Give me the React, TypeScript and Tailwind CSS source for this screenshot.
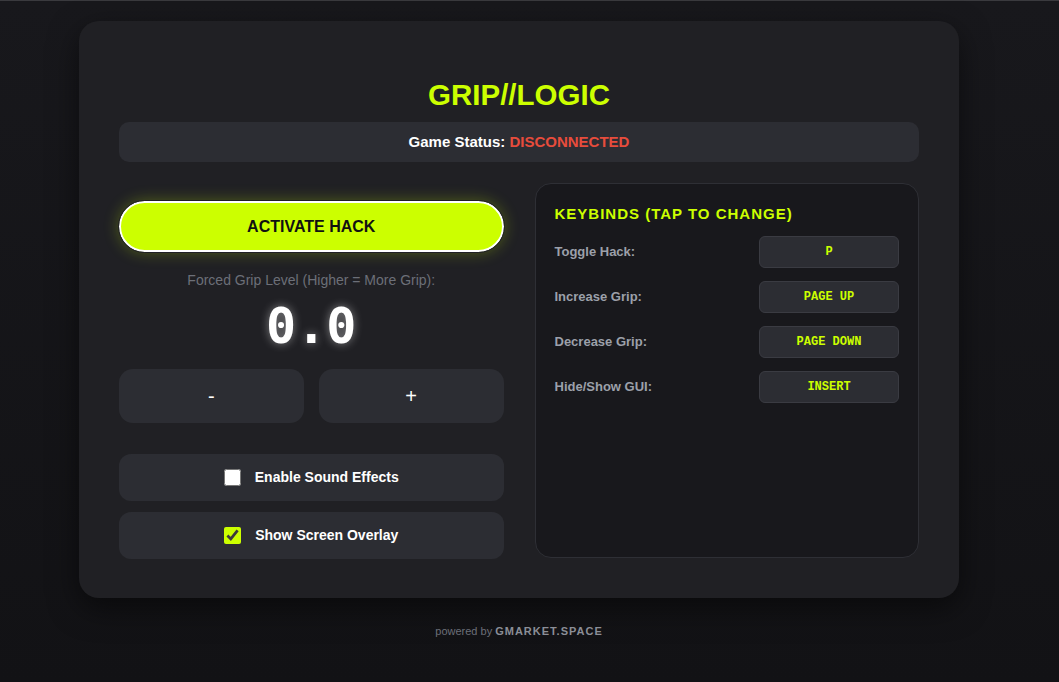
import { useState } from 'react';

const keybinds = [
    { label: 'Toggle Hack:', key: 'P' },
    { label: 'Increase Grip:', key: 'PAGE UP' },
    { label: 'Decrease Grip:', key: 'PAGE DOWN' },
    { label: 'Hide/Show GUI:', key: 'INSERT' },
];

export default function App() {
    const [grip, setGrip] = useState(0);
    const [sound, setSound] = useState(false);
    const [overlay, setOverlay] = useState(true);

    return (
        <div className="min-h-[682px] border-t border-[#3a3a3e] bg-gradient-to-b from-[#18181c] to-[#121215] font-['Liberation_Sans',Arial,sans-serif] flex flex-col items-center pt-[20px] pr-[21px]">
            {/* Main card */}
            <div className="w-[880px] h-[577px] bg-[#202024] rounded-[20px] shadow-[0_10px_30px_rgba(0,0,0,0.5)] px-[40px] pt-[58px]">
                <h1 className="text-center text-[29.5px] leading-[32px] font-bold text-[#ccff00]">GRIP//LOGIC</h1>

                <div className="mt-[11px] h-[40px] rounded-[10px] bg-[#2c2d33] flex items-center justify-center text-[15px] font-bold text-white">
                    Game Status:&nbsp;<span className="text-[#e74c3c]">DISCONNECTED</span>
                </div>

                <div className="mt-[21px] grid grid-cols-2 gap-[31px]">
                    {/* Left column */}
                    <div className="flex flex-col pt-[18px]">
                        <button className="h-[51px] rounded-full bg-[#ccff00] border-2 border-white outline outline-1 outline-[#202024] shadow-[0_0_16px_rgba(204,255,0,0.3)] text-[#111] text-[16px] font-bold">
                            ACTIVATE HACK
                        </button>
                        <div className="mt-[18px] text-center text-[14px] text-[#6c6f78]">Forced Grip Level (Higher = More Grip):</div>
                        <div className="mt-[6px] text-center font-['DejaVu_Sans_Mono',monospace] font-bold text-[50px] leading-[58px] text-white [text-shadow:0_0_10px_rgba(255,255,255,0.45)]">
                            {grip.toFixed(1)}
                        </div>
                        <div className="mt-[14px] grid grid-cols-2 gap-[15px]">
                            <button onClick={() => setGrip(grip - 0.1)} className="h-[54px] rounded-[14px] bg-[#2c2d33] text-white text-[20px]">-</button>
                            <button onClick={() => setGrip(grip + 0.1)} className="h-[54px] rounded-[14px] bg-[#2c2d33] text-white text-[20px]">+</button>
                        </div>
                        <label className="mt-[31px] h-[47px] rounded-[12px] bg-[#2c2d33] flex items-center justify-center gap-[14px] text-white text-[14px] font-bold cursor-pointer">
                            <input type="checkbox" checked={sound} onChange={() => setSound(!sound)} className="w-[17px] h-[17px] accent-[#ccff00]" />
                            Enable Sound Effects
                        </label>
                        <label className="mt-[11px] h-[47px] rounded-[12px] bg-[#2c2d33] flex items-center justify-center gap-[14px] text-white text-[14px] font-bold cursor-pointer">
                            <input type="checkbox" checked={overlay} onChange={() => setOverlay(!overlay)} className="w-[17px] h-[17px] accent-[#ccff00]" />
                            Show Screen Overlay
                        </label>
                    </div>

                    {/* Keybinds panel */}
                    <div className="h-[375px] rounded-[16px] bg-[#18181c] border border-[#2e2f35] px-[19px] pt-[20px]">
                        <h2 className="text-[15px] leading-[20px] font-bold tracking-[1px] text-[#ccff00]">KEYBINDS (TAP TO CHANGE)</h2>
                        <div className="mt-[12px] flex flex-col gap-[13px]">
                            {keybinds.map((k) => (
                                <div key={k.label} className="flex items-center justify-between">
                                    <span className="text-[13px] font-bold text-[#9ca0aa]">{k.label}</span>
                                    <button className="w-[140px] h-[32px] rounded-[6px] bg-[#2c2d33] border border-[#3a3b42] text-[#ccff00] text-[12px] font-bold font-['Liberation_Mono',monospace]">
                                        {k.key}
                                    </button>
                                </div>
                            ))}
                        </div>
                    </div>
                </div>
            </div>

            <div className="mt-[25px] text-[11px] text-[#6c6f78]">
                powered by <span className="text-[11px] font-bold tracking-[1px] text-[#8b8e97]">GMARKET.SPACE</span>
            </div>
        </div>
    );
}
